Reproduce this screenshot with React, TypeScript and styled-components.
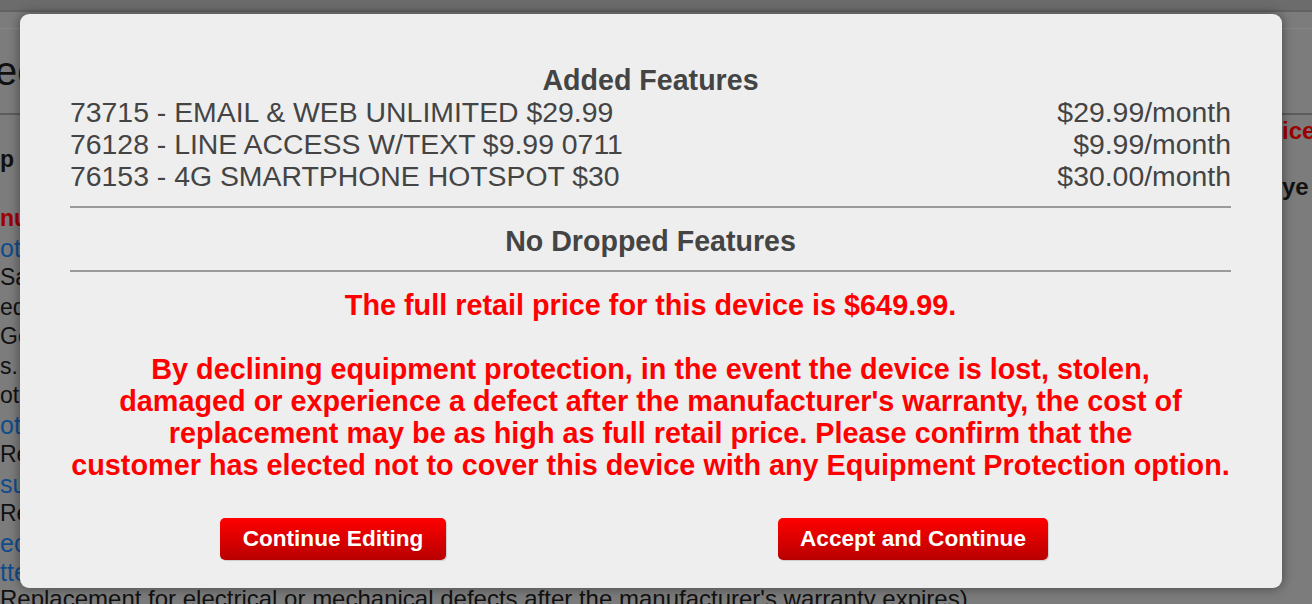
import React from 'react';
import styled, {createGlobalStyle} from 'styled-components';

const GlobalStyle = createGlobalStyle`
  html, body {
    margin: 0;
    padding: 0;
    width: 1312px;
    height: 604px;
    overflow: hidden;
    font-family: "Liberation Sans", Arial, sans-serif;
  }
`;

// dimmed page behind the dialog
const Page = styled.div`
  position: relative;
  width: 1312px;
  height: 604px;
  overflow: hidden;
  background: #7c7c7c;
`;

const TopBar = styled.div`
  height: 10px;
  background: #6c6c6c;
  border-bottom: 2px solid #626262;
`;

const TopStrip = styled.div`
  height: 16px;
  border-bottom: 1px solid #878787;
`;

const PageHeading = styled.h1`
  margin: 0 0 0 -5px;
  height: 86px;
  display: flex;
  align-items: center;
  font-size: 40px;
  font-weight: normal;
  color: #111;
  white-space: nowrap;
  border-bottom: 2px solid #5c5c5c;
  box-sizing: border-box;
`;

const Columns = styled.div`
  display: flex;
  justify-content: space-between;
`;

const LeftCol = styled.div`
  display: flex;
  flex-direction: column;
  padding-top: 30px;
  white-space: nowrap;
`;

const RightCol = styled.div`
  display: flex;
  flex-direction: column;
  align-items: flex-start;
  width: 30px;
  padding-top: 2px;
  gap: 28px;
  white-space: nowrap;
`;

const Line = styled.div<{$kind?: 'bold' | 'red' | 'blue' | 'plain'}>`
  height: 29.5px;
  line-height: 29.5px;
  font-size: ${p => (p.$kind === 'blue' ? '25px' : '23px')};
  font-weight: ${p => (p.$kind === 'bold' || p.$kind === 'red' ? 'bold' : 'normal')};
  color: ${p => (p.$kind === 'red' ? '#9c0000' : p.$kind === 'blue' ? '#0f4c8c' : '#111')};
`;

const SideText = styled.div<{$red?: boolean}>`
  font-size: 24px;
  font-weight: bold;
  color: ${p => (p.$red ? '#9c0000' : '#111')};
`;

const FootText = styled.div`
  position: absolute;
  left: 0;
  top: 585px;
  font-size: 24px;
  color: #111;
  white-space: nowrap;
`;

// dialog
const Dialog = styled.div`
  position: absolute;
  left: 20px;
  top: 14px;
  width: 1262px;
  height: 574px;
  box-sizing: border-box;
  padding: 50px 51px 0 50px;
  background: #eeeeee;
  border-radius: 9px;
  box-shadow: 0 0 12px rgba(0, 0, 0, 0.45);
  display: flex;
  flex-direction: column;
`;

const Title = styled.div`
  text-align: center;
  font-size: 28.6px;
  font-weight: bold;
  line-height: 32px;
  color: #444;
`;

const FeatureRow = styled.div`
  display: flex;
  justify-content: space-between;
  font-size: 28.4px;
  line-height: 32px;
  color: #444;
  white-space: nowrap;
`;

const Divider = styled.hr`
  margin: 14px 0 0;
  border: none;
  height: 2px;
  background: #9a9a9a;
`;

const Section = styled.div`
  padding: 17px 0 13px;
`;

const Warning = styled.div`
  text-align: center;
  font-size: 28.8px;
  font-weight: bold;
  line-height: 32px;
  color: #ff0000;
  white-space: nowrap;
`;

const Actions = styled.div`
  display: flex;
  gap: 332px;
  padding: 24px 0 0 150px;
`;

const Button = styled.button<{$w: number}>`
  width: ${p => p.$w}px;
  height: 42px;
  border: none;
  border-radius: 5px;
  background: linear-gradient(#ff0000, #b80000);
  box-shadow: 1px 1px 1px rgba(0, 0, 0, 0.15);
  color: #fff;
  font-family: "Liberation Sans", Arial, sans-serif;
  font-size: 22.6px;
  font-weight: bold;
  padding: 0;
  cursor: pointer;
`;

const features = [
  {name: '73715 - EMAIL & WEB UNLIMITED $29.99', price: '$29.99/month'},
  {name: '76128 - LINE ACCESS W/TEXT $9.99 0711', price: '$9.99/month'},
  {name: '76153 - 4G SMARTPHONE HOTSPOT $30', price: '$30.00/month'},
];

const leftLines: {text: string; kind: 'bold' | 'red' | 'blue' | 'plain'}[] = [
  {text: 'p', kind: 'bold'},
  {text: '', kind: 'plain'},
  {text: 'nu', kind: 'red'},
  {text: 'ota', kind: 'blue'},
  {text: 'Sa', kind: 'plain'},
  {text: 'ed', kind: 'plain'},
  {text: 'Ge', kind: 'plain'},
  {text: 's.', kind: 'plain'},
  {text: 'ot', kind: 'plain'},
  {text: 'ota', kind: 'blue'},
  {text: 'Re', kind: 'plain'},
  {text: 'su', kind: 'blue'},
  {text: 'Re', kind: 'plain'},
  {text: 'ec', kind: 'blue'},
  {text: 'tte', kind: 'blue'},
];

function App() {
  return (
    <>
      <GlobalStyle/>
      <Page>
        <TopBar/>
        <TopStrip/>
        <PageHeading>ec</PageHeading>
        <Columns>
          <LeftCol>
            {leftLines.map((l, i) => (
              <Line key={i} $kind={l.kind}>{l.text}</Line>
            ))}
          </LeftCol>
          <RightCol>
            <SideText $red>ice</SideText>
            <SideText>ye</SideText>
          </RightCol>
        </Columns>
        <FootText>Replacement for electrical or mechanical defects after the manufacturer's warranty expires)</FootText>

        <Dialog>
          <Title>Added Features</Title>
          {features.map(f => (
            <FeatureRow key={f.name}>
              <span>{f.name}</span>
              <span>{f.price}</span>
            </FeatureRow>
          ))}
          <Divider/>
          <Section>
            <Title>No Dropped Features</Title>
          </Section>
          <Divider style={{marginTop: 0}}/>
          <Section>
            <Warning>The full retail price for this device is $649.99.</Warning>
            <Warning>&nbsp;</Warning>
            <Warning>
              By declining equipment protection, in the event the device is lost, stolen,<br/>
              damaged or experience a defect after the manufacturer's warranty, the cost of<br/>
              replacement may be as high as full retail price. Please confirm that the<br/>
              customer has elected not to cover this device with any Equipment Protection option.
            </Warning>
          </Section>
          <Actions>
            <Button $w={226}>Continue Editing</Button>
            <Button $w={270}>Accept and Continue</Button>
          </Actions>
        </Dialog>
      </Page>
    </>
  );
}

export default App;
